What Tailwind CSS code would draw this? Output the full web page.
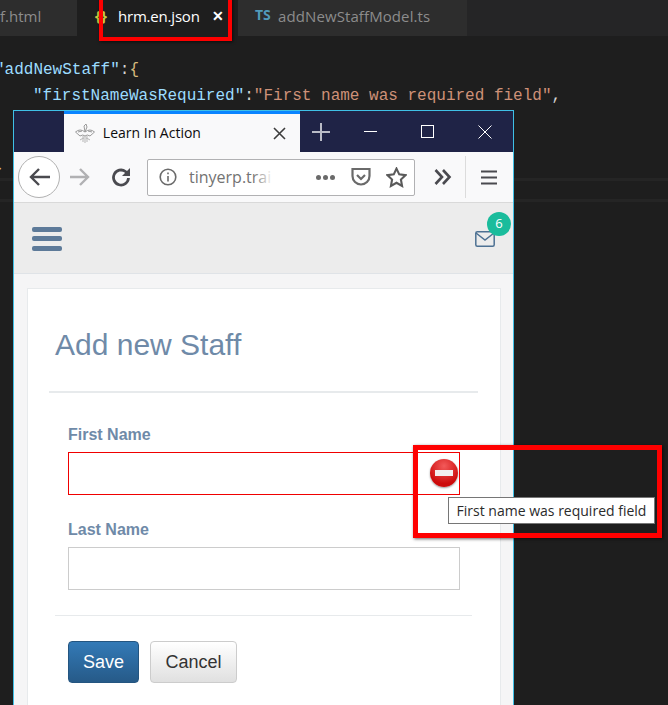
<!DOCTYPE html>
<html lang="en">
<head>
    <meta charset="UTF-8">
    <title>Add new Staff</title>
    <script src="https://cdn.jsdelivr.net/npm/@tailwindcss/browser@4"></script>
</head>
<body class="relative w-[668px] h-[705px] overflow-hidden bg-[#1e1e1e] font-['Liberation_Sans',sans-serif]">
    <!-- editor behind the browser -->
    <div class="flex h-[36px] bg-[#252526] font-['Open_Sans',sans-serif] text-[15px]">
        <div class="w-[77px] pr-[37px] bg-[#2d2d2d] text-[#8c8c8c] leading-[32px] text-right overflow-hidden">f.html</div>
        <div class="w-[161px] bg-[#1e1e1e] flex items-start pl-[18px] pt-[6px] text-white leading-[20px]">
            <span class="text-[#cbcb41] font-bold text-[15px] leading-[18px] w-[23px]">{}</span>
            <span class="tracking-[-0.2px]">hrm.en.json</span>
            <span class="ml-[12px] font-bold text-[14px]">✕</span>
        </div>
        <div class="w-[229px] bg-[#2d2d2d] flex items-start pl-[17px] pt-[6px] text-[#8c8c8c] leading-[20px]">
            <span class="text-[#519aba] font-bold text-[14px] w-[23px] leading-[17px]">TS</span>
            <span class="tracking-[0.1px]">addNewStaffModel.ts</span>
        </div>
    </div>
    <div class="font-['Liberation_Mono',monospace] text-[16px] leading-[26px] pt-[21px]">
        <div class="text-[#9cdcfe] ml-[-5px] whitespace-pre">"addNewStaff"<span class="text-[#d4d4d4]">:</span><span class="text-[#d7ba7d]">{</span></div>
        <div class="text-[#9cdcfe] ml-[33px] whitespace-pre">"firstNameWasRequired"<span class="text-[#d4d4d4]">:</span><span class="text-[#ce9178]">"First name was required field"</span><span class="text-[#d4d4d4]">,</span></div>
    </div>
    <div class="absolute left-[-7px] top-[157px] text-[#d7ba7d] font-['Liberation_Mono',monospace] text-[16px]">}</div>
    <div class="absolute left-0 right-0 top-[178px] h-[3px] bg-[#252525]"></div>
    <div class="absolute left-0 right-0 top-[199px] h-[3px] bg-[#252525]"></div>

    <!-- browser window -->
    <div class="absolute left-[13px] top-[110px] w-[501px] h-[600px] border border-[#3fc0e6] bg-[#f5f5f6] flex flex-col">
        <div class="h-[41px] bg-[#1f2346] flex shrink-0">
            <div class="w-[50px]"></div>
            <div class="w-[237px] bg-[#f9f9fa] border-t-[3px] border-[#0a84ff] flex items-center pl-[11px] pr-[14px]">
                <svg class="w-[20px] h-[20px] shrink-0" viewBox="0 0 20 20" fill="none" stroke="#9a9a9a" stroke-width="1">
                    <path d="M0.5 9 Q5 5 10 9 Q15 5 19.5 9 L15 13 Q12 11 10 13 Q8 11 5 13 Z"/>
                    <path d="M3 9 L7 8 M17 9 L13 8 M10 9 L9 3 L11 1 L12 4 L10 9"/>
                    <path stroke="#b5b5b5" d="M8 13 V19 M10 13 V20 M12 13 V19 M5 17 Q8 15 9 15 M15 17 Q12 15 11 15"/>
                </svg>
                <span class="ml-[8px] text-[14px] text-[#0c0c0d] font-['Open_Sans',sans-serif] leading-[20px]">Learn In Action</span>
                <svg class="ml-auto w-[13px] h-[13px]" viewBox="0 0 13 13" stroke="#3c3c3c" stroke-width="1.6"><path d="M1 1 L12 12 M12 1 L1 12"/></svg>
            </div>
            <div class="w-[40px] flex items-center justify-center">
                <svg class="w-[18px] h-[18px] ml-[2px]" viewBox="0 0 18 18" stroke="#b9bbc6" stroke-width="2"><path d="M9 0 V18 M0 9 H18"/></svg>
            </div>
            <div class="flex-1 flex items-center pl-[2px]">
                <div class="w-[57px] flex justify-center"><svg class="w-[13px] h-[13px]" viewBox="0 0 13 13" stroke="#fff"><path d="M0 6.5 H13"/></svg></div>
                <div class="w-[57px] flex justify-center"><svg class="w-[13px] h-[13px]" viewBox="0 0 13 13" fill="none" stroke="#fff"><rect x="0.5" y="0.5" width="12" height="12"/></svg></div>
                <div class="w-[57px] flex justify-center"><svg class="w-[14px] h-[14px]" viewBox="0 0 14 14" stroke="#fff"><path d="M0.5 0.5 L13.5 13.5 M13.5 0.5 L0.5 13.5"/></svg></div>
            </div>
        </div>
        <div class="h-[51px] bg-[#f9f9fa] flex items-center border-b border-[#d9d9d9] shrink-0 relative">
            <div class="ml-[4px] w-[42px] h-[42px] shrink-0 rounded-full border border-[#b1b1b1] bg-white flex items-center justify-center">
                <svg class="w-[21px] h-[20px]" viewBox="0 0 21 20" fill="none" stroke="#4a4a4f" stroke-width="2.4"><path d="M21 10 H2 M10 2 L2 10 L10 18"/></svg>
            </div>
            <svg class="ml-[10px] w-[20px] h-[20px] shrink-0" viewBox="0 0 20 20" fill="none" stroke="#b1b1b3" stroke-width="2.4"><path d="M0 10 H18 M10 2 L18 10 L10 18"/></svg>
            <svg class="ml-[21px] w-[20px] h-[20px] shrink-0" viewBox="0 0 20 20" fill="none" stroke="#4a4a4f" stroke-width="2.8"><path d="M17.5 11 A7.5 7.5 0 1 1 14.5 4.5 L17 7"/><path d="M19 1 V9 H11 Z" fill="#4a4a4f" stroke="none"/></svg>
            <div class="ml-[16px] w-[268px] h-[37px] shrink-0 bg-white border border-[#b1b1b3] rounded-[2px] flex items-center pl-[11px] relative">
                <svg class="w-[18px] h-[18px] shrink-0" viewBox="0 0 18 18" fill="none" stroke="#6a6a6a" stroke-width="1.6"><circle cx="9" cy="9" r="7.8"/><path d="M9 8 V13.5 M9 4.5 V6.2"/></svg>
                <span class="ml-[12px] text-[16px] text-[#737373] font-['Open_Sans',sans-serif] w-[82px] overflow-hidden whitespace-nowrap">tinyerp.trai</span>
                <span class="absolute left-[105px] top-[4px] w-[20px] h-[28px] bg-gradient-to-r from-white/0 to-white"></span>
                <span class="absolute left-[168px] top-[15px] flex gap-[2px]">
                    <i class="w-[5px] h-[5px] rounded-full bg-[#6a6a6a]"></i><i class="w-[5px] h-[5px] rounded-full bg-[#6a6a6a]"></i><i class="w-[5px] h-[5px] rounded-full bg-[#6a6a6a]"></i>
                </span>
                <svg class="absolute left-[203px] top-[7px] w-[20px] h-[20px]" viewBox="0 0 20 20" fill="none" stroke="#6a6a6a" stroke-width="2.2"><path d="M1.5 2 H18.5 V9 A8.5 8.5 0 0 1 1.5 9 Z"/><path d="M6 8 L10 12 L14 8"/></svg>
                <svg class="absolute left-[238px] top-[7px] w-[21px] h-[21px]" viewBox="0 0 20 20" fill="none" stroke="#5a5a5a" stroke-width="2"><path d="M10 1.5 L12.6 7 L18.5 7.8 L14.2 11.9 L15.3 18 L10 15 L4.7 18 L5.8 11.9 L1.5 7.8 L7.4 7 Z"/></svg>
            </div>
            <svg class="ml-[19px] w-[18px] h-[16px] shrink-0" viewBox="0 0 18 16" fill="none" stroke="#4a4a4f" stroke-width="2.6"><path d="M1.5 1 L8 8 L1.5 15 M9 1 L15.5 8 L9 15"/></svg>
            <div class="ml-[13px] w-px h-[42px] bg-[#dcdcdc] shrink-0"></div>
            <svg class="ml-[15px] w-[16px] h-[15px] shrink-0" viewBox="0 0 16 15" stroke="#4a4a4f" stroke-width="2"><path d="M0 1.5 H16 M0 7.5 H16 M0 13.5 H16"/></svg>
        </div>

        <!-- page -->
        <div class="h-[71px] bg-[#ececec] border-b border-[#dfe3e7] flex items-center justify-between shrink-0 relative">
            <div class="ml-[18px] mt-[1px] flex flex-col gap-[4.5px] w-[30px]">
                <i class="h-[5px] rounded-[2px] bg-[#5d7a99]"></i><i class="h-[5px] rounded-[2px] bg-[#5d7a99]"></i><i class="h-[5px] rounded-[2px] bg-[#5d7a99]"></i>
            </div>
            <svg class="mr-[18px] mt-[1px] w-[20px] h-[16px]" viewBox="0 0 20 16" fill="none" stroke="#4d7193" stroke-width="1.5"><rect x="0.8" y="0.8" width="18.4" height="14.4" rx="1.5"/><path d="M1 2 L10 9 L19 2"/></svg>
            <span class="absolute right-[2px] top-[9px] w-[24px] h-[24px] rounded-full bg-[#1abc9c] text-white text-[13px] font-['Open_Sans',sans-serif] flex items-center justify-center">6</span>
        </div>
        <div class="mt-[14px] ml-[13px] w-[474px] flex-1 bg-white border border-[#e7eaec] px-[22px]">
            <h1 class="ml-[5px] mt-[38px] text-[30px] leading-[36px] text-[#6f8aa8]">Add new Staff</h1>
            <div class="mt-[28px] ml-[-1px] h-[2px] bg-[#e7eaec] w-[429px]"></div>
            <form class="pl-[18px] pt-[32px]">
                <label class="block text-[16px] leading-[20px] font-bold text-[#6f8aa8]">First Name</label>
                <div class="mt-[7px] relative w-[392px] h-[43px] border border-[#f00000] bg-white">
                    <span class="absolute left-[361px] top-[6px] w-[28px] h-[28px] rounded-full bg-[radial-gradient(circle_at_50%_25%,#f35a5a,#cc0b0b_70%)] shadow-[0_1px_2px_rgba(0,0,0,.4)] flex items-center justify-center">
                        <i class="w-[18px] h-[6px] bg-[#f2eeee]"></i>
                    </span>
                </div>
                <label class="block mt-[25px] text-[16px] leading-[20px] font-bold text-[#6f8aa8]">Last Name</label>
                <div class="mt-[7px] w-[392px] h-[43px] border border-[#cccccc] bg-white"></div>
                <div class="mt-[25px] ml-[-13px] w-[417px] h-px bg-[#e7eaec]"></div>
                <div class="mt-[25px] flex gap-[11px]">
                    <button type="button" class="w-[71px] h-[42px] rounded-[4px] border border-[#245580] bg-gradient-to-b from-[#337ab7] to-[#265a88] text-white text-[18px]">Save</button>
                    <button type="button" class="w-[87px] h-[42px] rounded-[4px] border border-[#cccccc] bg-gradient-to-b from-white to-[#e0e0e0] text-[#333333] text-[18px]">Cancel</button>
                </div>
            </form>
        </div>
    </div>

    <!-- annotation and tooltip overlays -->
    <div class="absolute left-[99px] top-[-4px] w-[133px] h-[45px] border-[4px] border-[#fe0000] shadow-[1px_1px_3px_rgba(0,0,0,.6)]"></div>
    <div class="absolute left-[413px] top-[445px] w-[249px] h-[93px] border-[5px] border-[#fe0000] shadow-[1px_1px_3px_rgba(0,0,0,.6)]"></div>
    <div class="absolute left-[448px] top-[497px] w-[207px] h-[27px] bg-white border border-[#767676] text-[14px] leading-[25px] text-center text-[#2b2b2b] font-['Open_Sans',sans-serif] whitespace-nowrap">First name was required field</div>
</body>
</html>
